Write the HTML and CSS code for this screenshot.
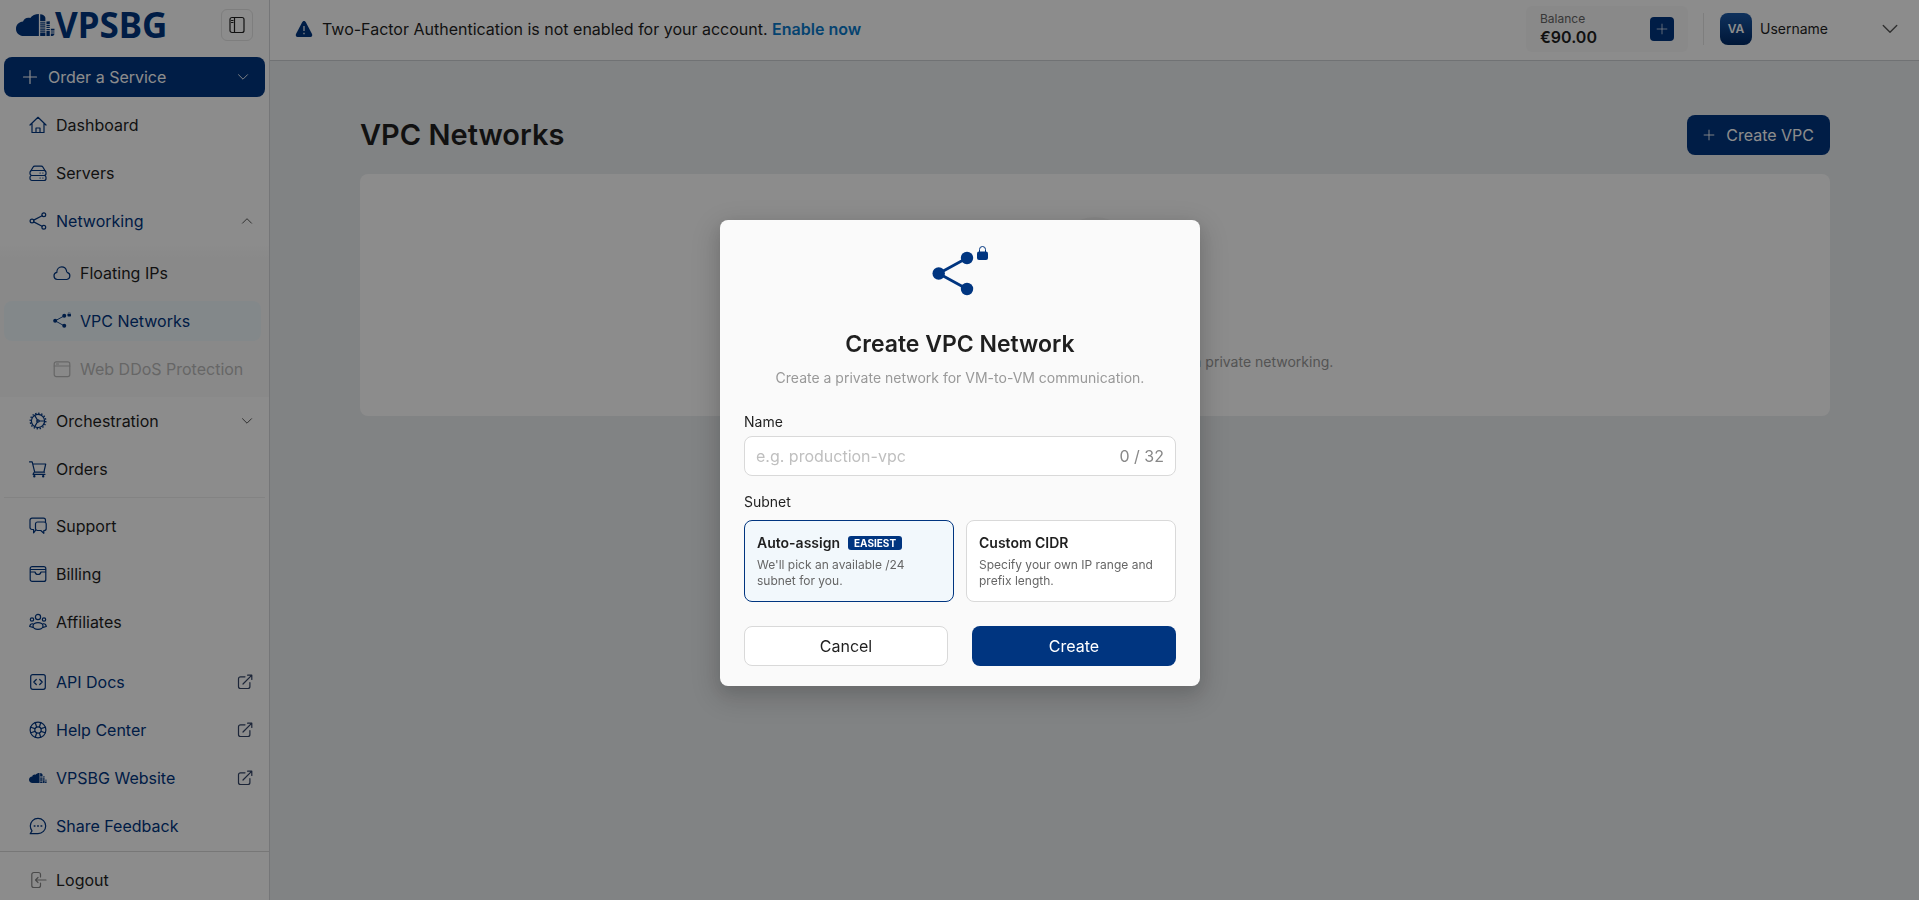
FILE: index.html
```html
<!DOCTYPE html>
<html lang="en">
<head>
<meta charset="utf-8">
<title>VPC Networks</title>
<link rel="stylesheet" href="styles.css">
</head>
<body>
<svg class="defs" aria-hidden="true">
  <symbol id="i-plus" viewBox="0 0 16 16"><path d="M8 1.500v13M1.500 8h13"/></symbol>
  <symbol id="i-down" viewBox="0 0 12 12"><path d="M1.500 3.700 6 8.200l4.500-4.500"/></symbol>
  <symbol id="i-up" viewBox="0 0 12 12"><path d="M1.500 8.200 6 3.700l4.500 4.500"/></symbol>
  <symbol id="i-ext" viewBox="0 0 16 16"><path d="M8 2.800H3.500a2 2 0 0 0-2 2v7.700a2 2 0 0 0 2 2h7.400a2 2 0 0 0 2-2V8.500M6 10 14.600 1.400M10.600 1.200h4.200v4.200"/></symbol>
  <symbol id="i-cloud" viewBox="0 0 150 84">
    <path d="M88 0v84H30C12 84 0 72 0 57s11-27 27-28c4-12 15-18 28-14C62 5 74 0 88 0z"/>
    <path d="M93 1c10 1 18 5 20 13v14H93zM93 31h20v5H93zM93 39h20v5H93zM93 47h20v5H93zM93 55h20v5H93zM93 63h20v5H93zM93 71h20v13H93zM117 29l13-1v10h-13zM117 41h13v5h-13zM117 49h13v5h-13zM117 57h13v5h-13zM117 65h13v19h-13zM134 56h14v7h-14zM134 67h14v4h-14zM134 75h14c0 5-4 9-9 9h-5z"/>
  </symbol>
  <symbol id="i-vpc" viewBox="0 0 56 52" overflow="visible">
    <path d="M6.700 25.500 35 10M6.700 25.500 35 41" fill="none" stroke="currentColor" stroke-width="2.800"/>
    <circle cx="6.700" cy="25.500" r="6.200"/><circle cx="35" cy="10" r="6.200"/><circle cx="35" cy="41" r="6.200"/>
    <rect x="45" y="3.500" width="11" height="8.500" rx="2"/><path d="M47.500 4V1.500a3 3 0 0 1 6 0V4" fill="none" stroke="currentColor" stroke-width="1"/>
  </symbol>
</svg>

<div class="app">
  <aside class="sidebar">
    <div class="brand">
      <a class="logo" href="#" aria-label="VPSBG">
        <svg class="logo-mark" aria-hidden="true"><use href="#i-cloud"/></svg><span class="logo-word">VPSBG</span>
      </a>
      <button class="toggle" type="button" aria-label="Collapse menu">
        <svg class="line" width="18" height="18" viewBox="0 0 18 18"><rect x="2" y="1.500" width="14" height="15" rx="2"/><path d="M6.500 1.500v15M3.500 4.500h1.500M3.500 6.500h1.500"/></svg>
      </button>
    </div>
    <button class="primary order" type="button">
      <svg class="line" width="16" height="16"><use href="#i-plus"/></svg>
      <span class="grow">Order a Service</span>
      <svg class="line thin" width="12" height="12"><use href="#i-down"/></svg>
    </button>
    <nav class="menu">
      <a class="item" href="#"><svg class="line ico" viewBox="0 0 18 18"><path d="M1 9 9 1.300 17 9M3 7.500v9h12v-9M7 16.500v-4.500h4v4.500"/></svg><span>Dashboard</span></a>
      <a class="item" href="#"><svg class="line ico" viewBox="0 0 18 18"><path d="M1.500 7.500 4 3.200q.6-1 1.800-1h6.400q1.200 0 1.800 1l2.500 4.300"/><rect x="1" y="6.500" width="16" height="5" rx="2"/><rect x="1" y="11.500" width="16" height="5" rx="2"/><path d="M11 9h.2M13.800 9h.2M11 14h.2M13.800 14h.2"/></svg><span>Servers</span></a>
      <a class="item active" href="#"><svg class="line ico" viewBox="0 0 18 18"><circle cx="3" cy="9" r="1.900"/><circle cx="14.800" cy="2.800" r="1.900"/><circle cx="14.800" cy="15.200" r="1.900"/><path d="m4.700 8.100 8.400-4.400M4.700 9.900l8.400 4.400"/></svg><span class="grow">Networking</span><svg class="line thin caret" width="12" height="12"><use href="#i-up"/></svg></a>
      <div class="submenu">
        <a class="item" href="#"><svg class="line ico" viewBox="0 0 18 18"><path d="M4.300 15.500a3.600 3.600 0 0 1-.5-7.100c0-3.300 2.200-5.600 5-5.600 2.300 0 4 1.300 4.600 3.600.2 1 .2 1.700.8 1.900a3.700 3.700 0 0 1-.4 7.200z"/></svg><span>Floating IPs</span></a>
        <a class="item active selected" href="#"><svg class="ico" fill="currentColor"><use href="#i-vpc"/></svg><span>VPC Networks</span></a>
        <a class="item disabled" href="#"><svg class="line ico" viewBox="0 0 18 18"><rect x="1.200" y="1.800" width="15.600" height="14.800" rx="2"/><path d="M1.200 6h15.600M3.500 4h2"/></svg><span>Web DDoS Protection</span></a>
      </div>
      <a class="item" href="#"><svg class="line ico" viewBox="0 0 18 18"><circle cx="9" cy="9" r="6.600"/><circle cx="9" cy="9" r="7.800" stroke-width="1.400" stroke-linecap="butt" stroke-dasharray="1.400 1.660"/><path d="M10.200 9h5.200M8.400 8 5.700 3.400M8.400 10l-2.700 4.600"/><circle cx="9" cy="9" r="1.200"/></svg><span class="grow">Orchestration</span><svg class="line thin caret" width="12" height="12"><use href="#i-down"/></svg></a>
      <a class="item" href="#"><svg class="line ico" viewBox="0 0 18 18"><path d="M.5 1.800h2.700l2.500 10.400h9.800M3.800 4h12.900l-1.800 8.200"/><path d="M5.200 12.200 4 14.300h12"/><circle cx="5.300" cy="16.200" r=".6"/><circle cx="14.200" cy="16.200" r=".6"/></svg><span>Orders</span></a>
      <hr>
      <a class="item" href="#"><svg class="line ico" viewBox="0 0 18 18"><path d="M6.500 13.300 4.600 15.800v-3.300H3a2 2 0 0 1-2-2V3.200a2 2 0 0 1 2-2h11.500a2 2 0 0 1 2 2v1.600"/><path d="M8.500 5h6.700a2 2 0 0 1 2 2v4.500a2 2 0 0 1-2 2h-.4v2.800l-3-2.800H8.500a2 2 0 0 1-2-2V7a2 2 0 0 1 2-2z"/></svg><span>Support</span></a>
      <a class="item" href="#"><svg class="line ico" viewBox="0 0 18 18"><rect x="1.200" y="1.600" width="15.600" height="14.800" rx="2"/><path d="M1.500 4.500h15M1.500 7H6c.4 1.800 1.500 2.500 3 2.500s2.600-.7 3-2.500h4.500"/></svg><span>Billing</span></a>
      <a class="item" href="#"><svg class="line ico" viewBox="0 0 18 18"><circle cx="9" cy="4" r="2.600"/><circle cx="3" cy="6.500" r="1.700"/><circle cx="15" cy="6.500" r="1.700"/><ellipse cx="9" cy="13" rx="5" ry="3.400"/><path d="M4 10.800c-2-.3-3 .8-3.300 2.700L4 14.300M14 10.800c2-.3 3 .8 3.300 2.700l-3.300.8"/></svg><span>Affiliates</span></a>
      <div class="links">
        <a class="item active" href="#"><svg class="line ico" viewBox="0 0 18 18"><rect x="1.700" y="1.700" width="14.600" height="14.600" rx="2"/><path d="M7.300 6.500 4.800 9l2.500 2.500M10.700 6.500 13.200 9l-2.500 2.500"/></svg><span class="grow">API Docs</span><svg class="line ext"><use href="#i-ext"/></svg></a>
        <a class="item active" href="#"><svg class="line ico" viewBox="0 0 18 18"><circle cx="9" cy="9" r="7.900"/><circle cx="9" cy="9" r="3.200"/><path d="M6.300 1.800 7.600 6M11.700 1.800 10.400 6M6.300 16.200 7.600 12M11.700 16.200 10.400 12M1.800 6.300 6 7.600M1.800 11.700 6 10.400M16.200 6.300 12 7.600M16.200 11.700 12 10.400"/></svg><span class="grow">Help Center</span><svg class="line ext"><use href="#i-ext"/></svg></a>
        <a class="item active" href="#"><svg class="ico" fill="currentColor"><use href="#i-cloud"/></svg><span class="grow">VPSBG Website</span><svg class="line ext"><use href="#i-ext"/></svg></a>
        <a class="item active" href="#"><svg class="line ico" viewBox="0 0 18 18"><path d="M1.200 16.700h7.800A7.700 7.700 0 1 0 1.300 9c0 1.900.7 3.500 1.700 4.900z"/><path d="M5.300 9h.6M8.700 9h.6M12.100 9h.6" stroke-width="1.600"/></svg><span>Share Feedback</span></a>
      </div>
    </nav>
    <div class="signout">
      <a class="item" href="#"><svg class="line ico muted" viewBox="0 0 18 18"><path d="M11.500 6V3.500a2 2 0 0 0-2-2H4.800a2 2 0 0 0-2 2v11a2 2 0 0 0 2 2h4.700a2 2 0 0 0 2-2V12M17 9H6.500M9 6.500 6.500 9 9 11.500"/></svg><span>Logout</span></a>
    </div>
  </aside>

  <div class="page">
    <header class="topbar">
      <svg class="warn" width="18" height="18" viewBox="0 0 18 18"><path d="M9 1c.8 0 1.300.5 1.700 1.100l6.300 12c.7 1.400 0 2.900-1.500 2.900h-13C1 17 .3 15.500 1 14.100l6.300-12C7.700 1.500 8.200 1 9 1z" fill="#003580"/><path d="M9 6v5M9 12.800v1.400" stroke="#fff" stroke-width="1.200"/></svg>
      <p class="notice">Two-Factor Authentication is not enabled for your account. <a href="#">Enable now</a></p>
      <div class="balance">
        <div><div class="caption">Balance</div><div class="amount">€90.00</div></div>
        <button class="primary add" type="button" aria-label="Add funds"><svg class="line thin" width="12" height="12"><use href="#i-plus"/></svg></button>
      </div>
      <button class="account" type="button">
        <span class="avatar">VA</span><span class="grow">Username</span>
        <svg class="line thin" width="18" height="18"><use href="#i-down"/></svg>
      </button>
    </header>
    <main class="content">
      <div class="heading">
        <h1>VPC Networks</h1>
        <button class="primary create" type="button"><svg class="line" width="12" height="12"><use href="#i-plus"/></svg>Create VPC</button>
      </div>
      <section class="empty">
        <span class="empty-icon"></span>
        <p>Create a VPC network to link your virtual servers via private networking.</p>
      </section>
    </main>
  </div>
</div>

<div class="mask">
  <form class="modal" role="dialog" aria-labelledby="modal-title">
    <svg class="modal-icon" fill="currentColor"><use href="#i-vpc"/></svg>
    <h2 id="modal-title">Create VPC Network</h2>
    <p class="lead">Create a private network for VM-to-VM communication.</p>
    <label class="label" for="name">Name</label>
    <div class="field"><input id="name" type="text" maxlength="32" placeholder="e.g. production-vpc"><span>0 / 32</span></div>
    <fieldset>
      <legend class="label">Subnet</legend>
      <div class="options">
        <label class="option"><input type="radio" name="subnet" checked><span class="option-title">Auto-assign <span class="tag">EASIEST</span></span><span class="option-text">We'll pick an available /24 subnet for you.</span></label>
        <label class="option"><input type="radio" name="subnet"><span class="option-title">Custom CIDR</span><span class="option-text">Specify your own IP range and prefix length.</span></label>
      </div>
    </fieldset>
    <div class="actions">
      <button class="secondary" type="button">Cancel</button>
      <button class="primary" type="button">Create</button>
    </div>
  </form>
</div>
</body>
</html>
```
FILE: styles.css
```css
* { box-sizing: border-box; }
body {
  margin: 0;
  font: 16px/24px Inter, "Liberation Sans", sans-serif;
  color: #1f1f1f;
  background: #ebeef0;
}
h1, h2, p { margin: 0; }
a { color: inherit; text-decoration: none; }
button, input { font: inherit; color: inherit; }
button { display: flex; align-items: center; border: 0; padding: 0; background: none; cursor: pointer; }
svg { flex: none; }
.defs { position: absolute; width: 0; height: 0; }
.line { fill: none; stroke: currentColor; stroke-width: 1.2; stroke-linecap: round; stroke-linejoin: round; }
.thin { stroke-width: 0.9; }
.grow { flex: 1; text-align: left; }
.primary { background: #003580; color: #fff; border-radius: 8px; height: 40px; }

.app { display: flex; min-height: 100vh; }
.sidebar { width: 270px; flex: none; display: flex; flex-direction: column; background: #fff; border-right: 1px solid #d5d8da; }
.brand { display: flex; align-items: center; justify-content: space-between; height: 50px; margin-bottom: 7px; padding: 0 16px; }
.logo { display: flex; align-items: center; color: #003580; fill: currentColor; }
.logo-mark { width: 39px; height: 28px; }
.logo-word { font: 700 35px/34px "Noto Sans", sans-serif; }
.toggle { width: 32px; height: 32px; justify-content: center; border: 1px solid #e5e5e5; border-radius: 6px; }
.order { margin: 0 4px; padding: 0 16px 0 18px; gap: 10px; }
.item { display: flex; align-items: center; height: 40px; margin: 4px 4px 8px; padding: 0 12px 0 25px; gap: 9px; border-radius: 8px; }
.item + .item { margin-top: 0; }
.menu > .item:first-child { margin-top: 8px; }
.ico { width: 18px; height: 18px; color: #003580; }
.active { color: #003580; }
.caret { color: #444; }
.ext { width: 16px; height: 16px; color: #334466; }
.submenu { background: linear-gradient(#fff, #fafafa 12px); margin-top: -4px; padding: 8px 0 4px; }
.submenu .item { margin-top: 0; padding-left: 49px; margin-right: 8px; }
.submenu .item:last-child { margin-bottom: 4px; }
.selected { background: #eff7fb; }
.disabled, .disabled .ico { color: #bbb; }
.submenu + .item { margin-top: 4px; }
.menu hr { border: 0; border-top: 1px solid #efefef; margin: 0 4px 8px; }
.links { padding-top: 12px; }
.links .item { margin-top: 0; }
.links .item:last-child { margin-bottom: 4px; }
.signout { margin-top: auto; border-top: 1px solid #d9d9d9; padding-top: 8px; }
.signout .item { margin: 0 4px; }
.item .muted { color: #888; }

.page { flex: 1; min-width: 0; }
.topbar { display: flex; align-items: center; height: 61px; padding: 0 20px 2px 25px; background: #fff; border-bottom: 1px solid #ccd0d3; }
.warn { margin-right: 9px; }
.notice { flex: 1; }
.notice a { color: #0a7acc; font-weight: 600; }
.balance { display: flex; align-items: center; justify-content: space-between; width: 162px; height: 46px; padding: 0 14px; background: #fafafa; border-radius: 6px; }
.caption { font-size: 12px; line-height: 16px; color: #666; }
.amount { font-weight: 600; line-height: 20px; }
.add { width: 24px; height: 24px; border-radius: 4px; justify-content: center; }
.account { width: 196px; height: 32px; margin-left: 15px; padding-left: 16px; gap: 8px; border-left: 1px solid #e5e5e5; font-size: 14px; }
.account svg { color: #555; }
.avatar { width: 32px; height: 32px; border-radius: 8px; background: linear-gradient(#1c5aa8, #002a66); color: #fff; font: 600 12px/32px Inter, sans-serif; text-align: center; }
.content { max-width: 1650px; margin: 0 auto; padding: 54px 89px 54px 90px; }
.heading { display: flex; align-items: center; justify-content: space-between; margin-bottom: 19px; }
h1 { font-size: 29px; line-height: 40px; font-weight: 600; }
.create { padding: 0 16px; gap: 11px; }
.empty { display: flex; flex-direction: column; align-items: center; gap: 54px; padding: 43px 24px; background: #fff; border-radius: 8px; font-size: 14px; line-height: 22px; color: #999; }
.empty-icon { width: 80px; height: 80px; border-radius: 50%; background: #f5f5f5; }

.mask { position: fixed; inset: 0; display: flex; align-items: center; justify-content: center; padding: 6px 0 0 1px; background: rgba(0, 0, 0, .45); }
.modal { width: 480px; padding: 28px 24px 20px; background: #fafafa; border-radius: 8px; box-shadow: 0 6px 16px rgba(0, 0, 0, .1), 0 9px 28px 8px rgba(0, 0, 0, .12); }
.modal-icon { display: block; width: 56px; height: 52px; margin: 0 auto 28px; color: #003580; overflow: visible; }
h2 { font-size: 23px; line-height: 32px; font-weight: 600; text-align: center; margin-bottom: 7px; }
.lead { font-size: 14px; line-height: 22px; text-align: center; color: #999; margin-bottom: 22px; }
.label { display: block; font-size: 14px; line-height: 22px; padding: 0; margin-bottom: 3px; }
.field { display: flex; align-items: center; height: 40px; padding: 0 11px; background: #fff; border: 1px solid #d9d9d9; border-radius: 8px; color: #888; }
.field input { flex: 1; min-width: 0; border: 0; padding: 0; outline: 0; background: none; }
.field input::placeholder { color: #bfbfbf; }
fieldset { border: 0; margin: 15px 0 24px; padding: 0; min-width: 0; }
fieldset .label { margin-bottom: 7px; }
.options { display: grid; grid-template-columns: 1fr 1fr; gap: 12px; }
.option { display: flex; flex-direction: column; gap: 3px; padding: 11px 12px 12px; background: #fff; border: 1px solid #d9d9d9; border-radius: 8px; cursor: pointer; }
.option:has(:checked) { background: #f2f8fc; border-color: #003580; }
.option input { position: absolute; opacity: 0; }
.option-title { display: flex; align-items: center; gap: 8px; font-size: 14px; line-height: 22px; font-weight: 600; }
.option-text { font-size: 12px; line-height: 16px; color: #666; }
.tag { padding: 0 6px; border-radius: 3px; background: #003580; color: #fff; font-size: 10px; line-height: 14px; font-weight: 700; }
.actions { display: grid; grid-template-columns: 1fr 1fr; gap: 24px; }
.actions button { justify-content: center; }
.secondary { height: 40px; background: #fff; border: 1px solid #d9d9d9; border-radius: 8px; }
```
